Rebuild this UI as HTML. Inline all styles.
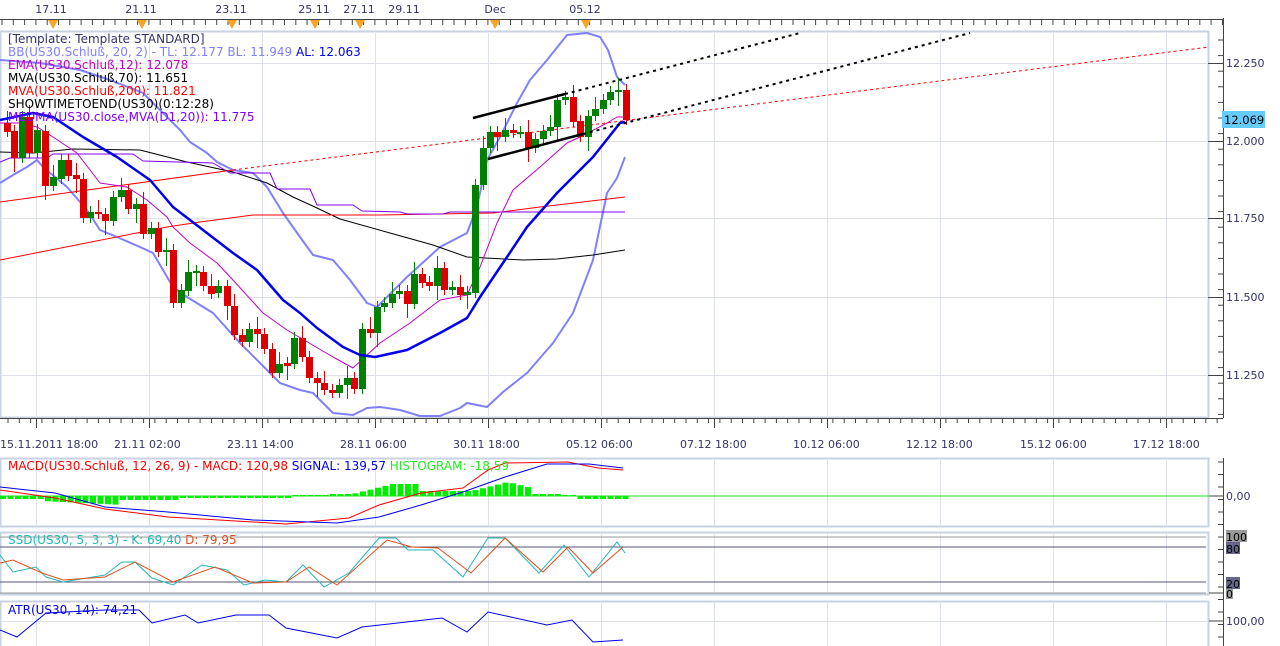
<!DOCTYPE html>
<html><head><meta charset="utf-8"><style>
html,body{margin:0;padding:0;background:#fff;width:1280px;height:646px;overflow:hidden}
svg{display:block;font-family:"DejaVu Sans","Liberation Sans",sans-serif}
.ax{fill:#333366;font-size:11px}
.lg{font-size:12px}
</style></head><body>
<svg id="s" width="1280" height="646" viewBox="0 0 1280 646" xmlns="http://www.w3.org/2000/svg">
<rect width="1280" height="646" fill="#fff"/>
<g id="topticks" stroke="#444" stroke-width="1"></g>
<line x1="0" y1="19.5" x2="1223" y2="19.5" stroke="#444"/>
<g class="ax" text-anchor="middle">
<text x="51" y="13">17.11</text><text x="141" y="13">21.11</text><text x="231" y="13">23.11</text>
<text x="314" y="13">25.11</text><text x="359" y="13">27.11</text><text x="404" y="13">29.11</text>
<text x="495" y="13">Dec</text><text x="585" y="13">05.12</text>
</g>
<g fill="#f8a428">
<path d="M48 20h10l-5 9z"/><path d="M137 20h10l-5 9z"/><path d="M227 20h10l-5 9z"/><path d="M310 20h10l-5 9z"/><path d="M355 20h10l-5 9z"/><path d="M490 20h10l-5 9z"/><path d="M581 20h10l-5 9z"/>
</g>
<rect x="0.5" y="31.5" width="1208" height="386" fill="#fff" stroke="#c8d2e0" stroke-width="2"/>
<g id="grid" stroke="#dfe2ea" stroke-width="1"></g>
<line x1="1223.5" y1="18" x2="1223.5" y2="418" stroke="#444"/>
<g id="rticks" stroke="#444"></g>
<g class="ax">
<text x="1226" y="67">12.250</text><text x="1226" y="145">12.000</text><text x="1226" y="222">11.750</text><text x="1226" y="301">11.500</text><text x="1226" y="379">11.250</text>
</g>
<rect x="1222" y="111" width="43" height="17" fill="#66ccff"/>
<text x="1224" y="124" font-size="11.5" fill="#000">12.069</text>

<g fill="none" stroke-linejoin="round">
<polyline stroke="#8080ff" stroke-width="2" points="0,60 40,63 80,70 110,80 143,93 180,130 190,142 207,153 217,162 233,170 253,173 267,187 283,213 300,237 313,255 333,260 350,280 367,303 377,307 407,277 440,247 467,233 477,207 487,160 500,137 517,103 530,80 547,60 567,35 587,33 600,37 608,50 617,77 625,85"/>
<polyline stroke="#8080ff" stroke-width="2" points="0,183 13,175 27,167 37,160 43,167 67,187 87,210 100,230 117,237 140,247 153,253 173,287 187,297 213,313 240,343 267,370 280,383 300,390 313,393 333,413 353,415 367,408 380,407 400,410 420,416 440,416 460,408 467,403 487,407 503,392 527,373 553,343 573,313 593,260 607,193 617,178 625,157"/>
<polyline stroke="#000" stroke-width="1" points="0,152 33,153 73,149 140,150 187,162 233,172 267,183 293,197 317,208 340,219 390,233 433,245 467,257 523,260 557,259 593,255 625,250"/>
<polyline stroke="#f00" stroke-width="1" points="0,202 233,170"/>
<polyline stroke="#f00" stroke-width="1" points="0,260 167,227 200,222 253,215 333,215 380,215 493,213 540,207 625,197"/>
<line x1="233" y1="170" x2="1209" y2="47" stroke="#f00" stroke-dasharray="3,3"/>
<polyline stroke="#8000ff" stroke-width="1" points="0,162 10,158 47,158 53,154 133,154 143,161 213,163 230,173 270,173 277,189 310,189 317,205 353,205 362,211 400,212 407,214 443,214 450,212 625,212"/>
<polyline stroke="#c000c0" stroke-width="1" points="0,123 20,123 37,127 47,133 77,153 100,183 127,187 147,200 167,217 173,227 190,243 217,263 233,280 263,313 287,330 333,357 353,368 380,343 410,323 440,300 467,295 480,267 497,223 513,190 540,167 567,143 580,137 607,123 617,117 625,117"/>
</g>
<g id="candles"></g>
<g fill="none">
<polyline stroke="#0000ee" stroke-width="2.5" stroke-linejoin="round" points="0,120 33,113 53,117 83,137 117,157 150,180 173,207 190,220 233,253 257,270 283,300 300,313 317,328 343,347 360,355 375,357 407,350 440,333 467,318 480,297 507,257 527,227 557,193 593,157 620,123 625,122"/>
<line x1="473" y1="118" x2="565" y2="94" stroke="#000" stroke-width="2.5"/>
<line x1="565" y1="94" x2="800" y2="33" stroke="#000" stroke-width="2" stroke-dasharray="3,4"/>
<line x1="488" y1="159" x2="583" y2="134" stroke="#000" stroke-width="2.5"/>
<line x1="583" y1="134" x2="970" y2="33" stroke="#000" stroke-width="2" stroke-dasharray="3,4"/>
</g>
<g class="lg">
<text x="8" y="43" fill="#333366">[Template: Template STANDARD]</text>
<text x="8" y="56" fill="#8080ff">BB(US30.Schluß, 20, 2) -  TL: 12.177  BL: 11.949  <tspan fill="#0000ee">AL: 12.063</tspan></text>
<text x="8" y="69" fill="#c000c0">EMA(US30.Schluß,12): 12.078</text>
<text x="8" y="82" fill="#000">MVA(US30.Schluß,70): 11.651</text>
<text x="8" y="95" fill="#f00">MVA(US30.Schluß,200): 11.821</text>
<text x="8" y="108" fill="#000">SHOWTIMETOEND(US30)(0:12:28)</text>
<text x="8" y="121" fill="#8000ff">MEDMA(US30.close,MVA(D1,20)): 11.775</text>
</g>
<line x1="0" y1="418.5" x2="1223" y2="418.5" stroke="#444"/>
<g id="bticks" stroke="#444"></g>
<g class="ax">
<text x="0" y="448">15.11.2011 18:00</text><text x="114" y="448">21.11 02:00</text><text x="227" y="448">23.11 14:00</text><text x="340" y="448">28.11 06:00</text><text x="453" y="448">30.11 18:00</text><text x="566" y="448">05.12 06:00</text><text x="680" y="448">07.12 18:00</text><text x="793" y="448">10.12 06:00</text><text x="906" y="448">12.12 18:00</text><text x="1020" y="448">15.12 06:00</text><text x="1133" y="448">17.12 18:00</text>
</g>
<rect x="0.5" y="458.5" width="1208" height="68" fill="#fff" stroke="#c8d2e0" stroke-width="2"/>
<g id="g2" stroke="#dfe2ea"></g>
<line x1="0" y1="496" x2="1223" y2="496" stroke="#22dd22"/>
<line x1="1209" y1="496" x2="1223" y2="496" stroke="#444"/>
<g id="hist" fill="#00ee00"></g>
<polyline fill="none" stroke="#f00" points="0,490 55,498 105,509 168,517 253,522 286,524 349,518 379,505 421,493 463,488 488,470 505,463 568,462 598,468 623,470"/>
<polyline fill="none" stroke="#0000ee" points="0,487 55,493 105,507 168,512 253,520 337,523 379,517 421,505 463,492 505,477 547,464 589,464 623,468"/>
<text x="8" y="470" class="lg" fill="#f00">MACD(US30.Schluß, 12, 26, 9) -  MACD: 120,98  <tspan fill="#0000ee">SIGNAL: 139,57</tspan>  <tspan fill="#22ee22">HISTOGRAM: -18,59</tspan></text>
<text x="1226" y="500" class="ax">0,00</text>
<rect x="0.5" y="532.5" width="1208" height="62" fill="#fff" stroke="#c8d2e0" stroke-width="2"/>
<g id="g3" stroke="#dfe2ea"></g>
<line x1="0" y1="537" x2="1206" y2="537" stroke="#999"/>
<line x1="0" y1="593" x2="1206" y2="593" stroke="#999"/>
<line x1="0" y1="547" x2="1206" y2="547" stroke="#555577"/>
<line x1="0" y1="582" x2="1206" y2="582" stroke="#555577"/>
<polyline fill="none" stroke="#20b8b8" points="0,555 13,572 36,567 46,577 63,582 105,575 122,562 135,562 152,578 173,585 202,565 227,570 244,585 265,580 286,582 303,565 324,587 349,573 379,538 396,538 408,550 433,550 463,577 488,538 505,538 539,573 564,545 589,577 617,542 625,553"/>
<polyline fill="none" stroke="#e05020" points="0,563 13,560 42,573 63,580 105,577 135,562 173,582 215,567 253,583 286,582 309,567 337,585 387,540 412,547 438,548 471,573 505,538 543,572 568,547 593,573 623,547"/>
<text x="8" y="544" class="lg" fill="#20b8b8">SSD(US30, 5, 3, 3) -  K: 69,40  <tspan fill="#e05020">D: 79,95</tspan></text>
<rect x="1226" y="530" width="21" height="12" fill="#999"/><text x="1226" y="541" font-size="11">100</text>
<rect x="1226" y="542" width="14" height="12" fill="#666688"/><text x="1226" y="553" font-size="11">80</text>
<rect x="1226" y="577" width="14" height="12" fill="#666688"/><text x="1226" y="588" font-size="11">20</text>
<rect x="1226" y="589" width="7" height="10" fill="#999"/><text x="1226" y="598" font-size="11">0</text>
<line x1="1209" y1="593" x2="1223" y2="593" stroke="#444"/>
<rect x="0.5" y="601.5" width="1208" height="50" fill="#fff" stroke="#c8d2e0" stroke-width="2"/>
<g id="g4" stroke="#dfe2ea"></g>
<line x1="1209" y1="621" x2="1223" y2="621" stroke="#444"/>
<polyline fill="none" stroke="#0000ee" points="0,630 17,637 46,613 105,610 139,610 152,623 185,615 198,623 236,615 269,615 286,628 337,638 362,627 442,618 467,632 488,612 547,625 572,620 593,642 623,640"/>
<text x="8" y="614" class="lg" fill="#0000ee">ATR(US30, 14): 74,21</text>
<text x="1226" y="625" class="ax">100,00</text>
<line x1="1223.5" y1="458" x2="1223.5" y2="646" stroke="#444"/>
<g id="lticks" stroke="#444"></g>
</svg>
<script>
var NS="http://www.w3.org/2000/svg";
function el(p,t,a){var e=document.createElementNS(NS,t);for(var k in a)e.setAttribute(k,a[k]);document.getElementById(p).appendChild(e);return e;}
for(var x=2;x<1223;x+=11.3){el("topticks","line",{x1:x,y1:19,x2:x,y2:25});}
for(var x=36;x<1209;x+=113){el("grid","line",{x1:x+.5,y1:33,x2:x+.5,y2:416});
 ["g2","g3","g4"].forEach(function(g){var y1={g2:460,g3:534,g4:603}[g],y2={g2:526,g3:594,g4:646}[g];el(g,"line",{x1:x+.5,y1:y1,x2:x+.5,y2:y2});});}
[63,141,218,297,375].forEach(function(y){el("grid","line",{x1:2,y1:y+.5,x2:1207,y2:y+.5});el("rticks","line",{x1:1208,y1:y+.5,x2:1223,y2:y+.5});});
el("g4","line",{x1:2,y1:621.5,x2:1207,y2:621.5});
for(var y=40;y<418;y+=15.6){el("rticks","line",{x1:1218,y1:y,x2:1223,y2:y});}
for(var y=462;y<646;y+=12.5){el("lticks","line",{x1:1218,y1:y,x2:1223,y2:y});}
for(var x=8;x<1223;x+=11.3){el("bticks","line",{x1:x,y1:418,x2:x,y2:423});}
for(var x=36;x<1223;x+=113){el("bticks","line",{x1:x+.5,y1:418,x2:x+.5,y2:428});}
var C=[[7,123,132,0],[14,131,158,0],[22,117,158,1],[29,117,153,0],[37,130,153,1],[45,131,186,0],[53,177,186,1],[61,160,179,1],[68,160,176,0],[76,175,179,0],[83,179,218,0],[90,212,218,1],[98,212,214,0],[105,214,221,0],[113,197,221,1],[121,190,197,1],[128,190,209,0],[136,204,209,1],[143,204,234,0],[151,228,234,1],[158,228,252,0],[166,250,252,1],[173,250,303,0],[181,290,303,1],[188,272,291,1],[196,271,272,1],[203,272,286,0],[211,286,294,0],[218,286,293,1],[227,286,306,0],[234,306,335,0],[242,335,342,0],[249,329,342,1],[257,329,334,0],[264,334,349,0],[272,349,373,0],[279,364,373,1],[287,363,366,0],[294,338,364,1],[302,338,357,0],[309,357,378,0],[317,378,383,0],[324,383,390,0],[332,390,393,0],[339,385,393,1],[347,378,385,1],[354,378,389,0],[362,329,389,1],[370,329,333,0],[377,307,333,1],[384,303,307,1],[392,294,303,1],[399,291,294,1],[407,291,304,0],[414,274,304,1],[422,274,283,0],[429,282,286,0],[437,268,286,1],[444,268,290,0],[452,287,290,1],[460,287,295,0],[467,292,295,1],[475,185,293,1],[483,148,185,1],[490,132,148,1],[497,132,137,0],[505,130,137,1],[513,130,133,0],[520,132,133,1],[528,132,148,0],[535,139,148,1],[543,131,139,1],[550,127,131,1],[557,100,127,1],[565,97,100,1],[573,97,122,0],[580,121,137,0],[588,116,137,1],[595,109,116,1],[603,100,109,1],[610,92,100,1],[618,90,92,1],[626,90,120,0]];
C.forEach(function(c,i){var col=c[3]?"#008000":"#dd0000";var h=(i%3==0)?12:6;
 el("candles","line",{x1:c[0]+.5,y1:c[1]-h,x2:c[0]+.5,y2:c[2]+(i%4==1?14:5),stroke:col});
 el("candles","rect",{x:c[0]-3,y:c[1],width:7,height:Math.max(2,c[2]-c[1]),fill:col});});
for(var x=0;x<630;x+=7.5){var v;
 if(x<40)v=-3;else if(x<115)v=-5-((x-40)/20);else if(x<180)v=-4;else if(x<290)v=-2;else if(x<330)v=1;else if(x<350)v=2;else if(x<420)v=Math.min(12,2+(x-350)/4);else if(x<470)v=5;else if(x<530)v=Math.min(14,(x-460)/2);else if(x<560)v=2;else if(x<575)v=1;else v=-3;
 if(x>=470&&x<530)v=14-Math.abs(x-505)/4;
 if(Math.abs(v)<1)continue;
 el("hist","rect",{x:x,y:v>0?496-v:496,width:6,height:Math.abs(v)});}
</script>
</body></html>
